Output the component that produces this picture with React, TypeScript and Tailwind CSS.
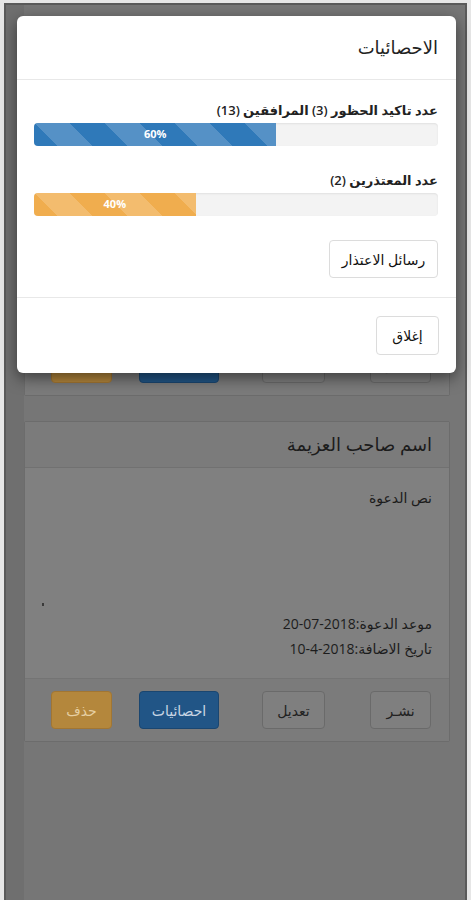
import React from "react";

const FONT = "font-['Open_Sans','DejaVu_Sans',sans-serif]";

const STRIPES =
  "bg-[linear-gradient(45deg,rgba(255,255,255,.18)_25%,transparent_25%,transparent_50%,rgba(255,255,255,.18)_50%,rgba(255,255,255,.18)_75%,transparent_75%,transparent)] bg-[length:70px_70px]";

// one invitation card in the (dimmed) page behind the dialog
function InviteCard() {
  return (
    <div className="w-[426px] border border-[#6c6c6c] bg-[#808080] rounded-[2px]">
      <div className="h-[46px] bg-[#7b7b7b] border-b border-[#717171] flex items-center pr-[17px]">
        <h3 className="text-[18px] text-[#1c1c1c]">اسم صاحب العزيمة</h3>
      </div>
      <div className="h-[210px] flex flex-col pt-[19px] pb-[17px] pr-[17px] pl-[17px] text-[14px] text-[#1c1c1c]">
        <p className="leading-[22px]">نص الدعوة</p>
        <div className="flex-1 flex justify-end items-end pb-[5px]">
          <span className="block w-[2px] h-[3px] bg-[#3a3a3a]" />
        </div>
        <p className="leading-[25px]">
          موعد الدعوة:<span dir="ltr">20-07-2018</span>
        </p>
        <p className="leading-[25px]">
          تاريخ الاضافة:<span dir="ltr">10-4-2018</span>
        </p>
      </div>
      <div className="h-[63px] bg-[#7b7b7b] border-t border-[#747474] flex items-center pr-[18px] text-[14px]">
        <button className="w-[61px] h-[38px] rounded-[4px] border border-[#6a6a6a] bg-[#7f7f7f] text-[#222]">نشـر</button>
        <button className="mr-[45px] w-[63px] h-[38px] rounded-[4px] border border-[#6a6a6a] bg-[#7f7f7f] text-[#222]">تعديل</button>
        <button className="mr-[43px] w-[80px] h-[38px] rounded-[4px] border border-[#1a4670] bg-[#215586] text-[#c9d6e4]">احصائيات</button>
        <button className="mr-[27px] w-[61px] h-[38px] rounded-[4px] border border-[#a27632] bg-[#b4873c] text-[#e6cfa2]">حذف</button>
      </div>
    </div>
  );
}

function StatBar({ label, pct, color }: { label: string; pct: number; color: string }) {
  return (
    <div>
      <p className="text-[13px] leading-[20px] text-[#222] font-semibold">{label}</p>
      <div className="mt-[3px] h-[23px] rounded-[4px] bg-[#f3f3f3] shadow-[inset_0_1px_2px_rgba(0,0,0,0.08)] overflow-hidden flex" dir="ltr">
        <div
          className={`${color} ${STRIPES} h-full flex items-center justify-center text-white text-[11px] font-bold`}
          style={{ width: `${pct}%` }}
        >
          {pct}%
        </div>
      </div>
    </div>
  );
}

export default function App() {
  return (
    <div dir="rtl" className={`relative w-[471px] h-[900px] bg-[#e6e6e6] pl-[4px] pr-[4px] pt-[3px] overflow-hidden ${FONT}`}>
      {/* page behind the overlay */}
      <div dir="ltr" className="h-[897px] border-x-2 border-t-2 border-[#5a5a5a] bg-[#767676] flex">
        <div className="w-[18px] bg-[#6f6f6f]" />
        <div dir="rtl" className="pt-[70px] flex flex-col gap-[25px]">
          <InviteCard />
          <InviteCard />
        </div>
      </div>

      {/* statistics dialog */}
      <div className="absolute left-[17px] top-[16px] w-[439px] bg-white rounded-[6px] shadow-[0_5px_15px_rgba(0,0,0,0.5)]">
        <div className="h-[64px] border-b border-[#e8e8e8] flex items-center pr-[18px]">
          <h4 className="text-[18px] text-[#222]">الاحصائيات</h4>
        </div>
        <div className="pt-[20px] pb-[19px] pr-[18px] pl-[17px]">
          <StatBar label="عدد تاكيد الحظور (3) المرافقين (13)" pct={60} color="bg-[#2f79b9]" />
          <div className="mt-[24px]">
            <StatBar label="عدد المعتذرين (2)" pct={40} color="bg-[#f0ad4e]" />
          </div>
          <button className="mt-[24px] w-[109px] h-[38px] rounded-[4px] border border-[#dcdcdc] bg-white text-[14px] text-[#111]">
            رسائل الاعتذار
          </button>
        </div>
        <div className="border-t border-[#e8e8e8] pt-[18px] pb-[18px] pr-[17px]">
          <button className="w-[63px] h-[39px] rounded-[4px] border border-[#dcdcdc] bg-white text-[14px] text-[#111]">
            إغلاق
          </button>
        </div>
      </div>
    </div>
  );
}
